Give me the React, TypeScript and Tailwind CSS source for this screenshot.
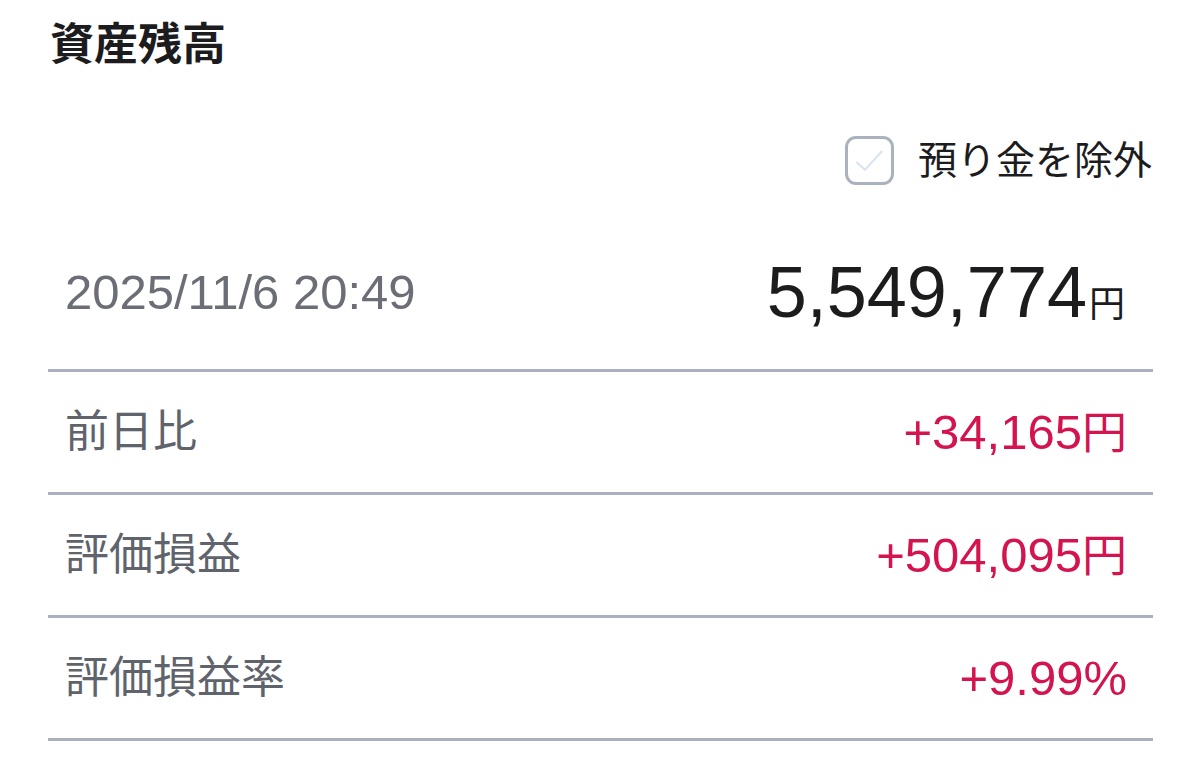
import React from 'react';

const font = { fontFamily: '"Liberation Sans", "Noto Sans CJK JP", sans-serif' };

interface RowProps {
    label: string;
    value: string;
    unit?: string;
}

const StatRow: React.FC<RowProps> = ({ label, value, unit }) => (
    <div className="border-t-[3px] border-[#aab0bd] h-[123px] flex items-center justify-between pl-[17px] pr-[26px]">
        <span className="text-[44px] leading-none text-[#5f636b]">{label}</span>
        <span className="text-[49px] leading-none text-[#d3144f] flex items-baseline">
            {value}
            {unit && <span className="text-[45px]">{unit}</span>}
        </span>
    </div>
);

const App: React.FC = () => {
    return (
        <div className="w-[1200px] h-[784px] bg-white px-[48px] pr-[47px] overflow-hidden" style={font}>
            <h1 className="pl-[2px] pt-[23px] text-[44px] leading-[44px] font-bold text-[#1c1c1e]">資産残高</h1>

            <div className="mt-[69px] flex items-center justify-end gap-[24px] pr-[1px]">
                <div className="w-[49px] h-[49px] rounded-[11px] border-[3px] border-[#aab1bf] flex items-center justify-center">
                    <svg width="38" height="38" viewBox="0 0 24 24" fill="none" stroke="#dbe5f1" strokeWidth="1.4" strokeLinecap="round" strokeLinejoin="round">
                        <path d="M4.5 13l5 4.5L20 6" />
                    </svg>
                </div>
                <span className="text-[39px] leading-none text-[#1c1c1e]">預り金を除外</span>
            </div>

            <div className="h-[184px] flex items-center justify-between pt-[30px] pl-[17px] pr-[28px]">
                <span className="text-[49px] leading-none text-[#6b6e76]">2025/11/6 20:49</span>
                <span className="flex items-baseline text-[#1c1c1e]">
                    <span className="text-[72px] leading-none">5,549,774</span>
                    <span className="text-[36px] leading-none ml-[2px]">円</span>
                </span>
            </div>

            <StatRow label="前日比" value="+34,165" unit="円" />
            <StatRow label="評価損益" value="+504,095" unit="円" />
            <StatRow label="評価損益率" value="+9.99%" />
            <div className="border-t-[3px] border-[#aab0bd]" />
        </div>
    );
};

export default App;
